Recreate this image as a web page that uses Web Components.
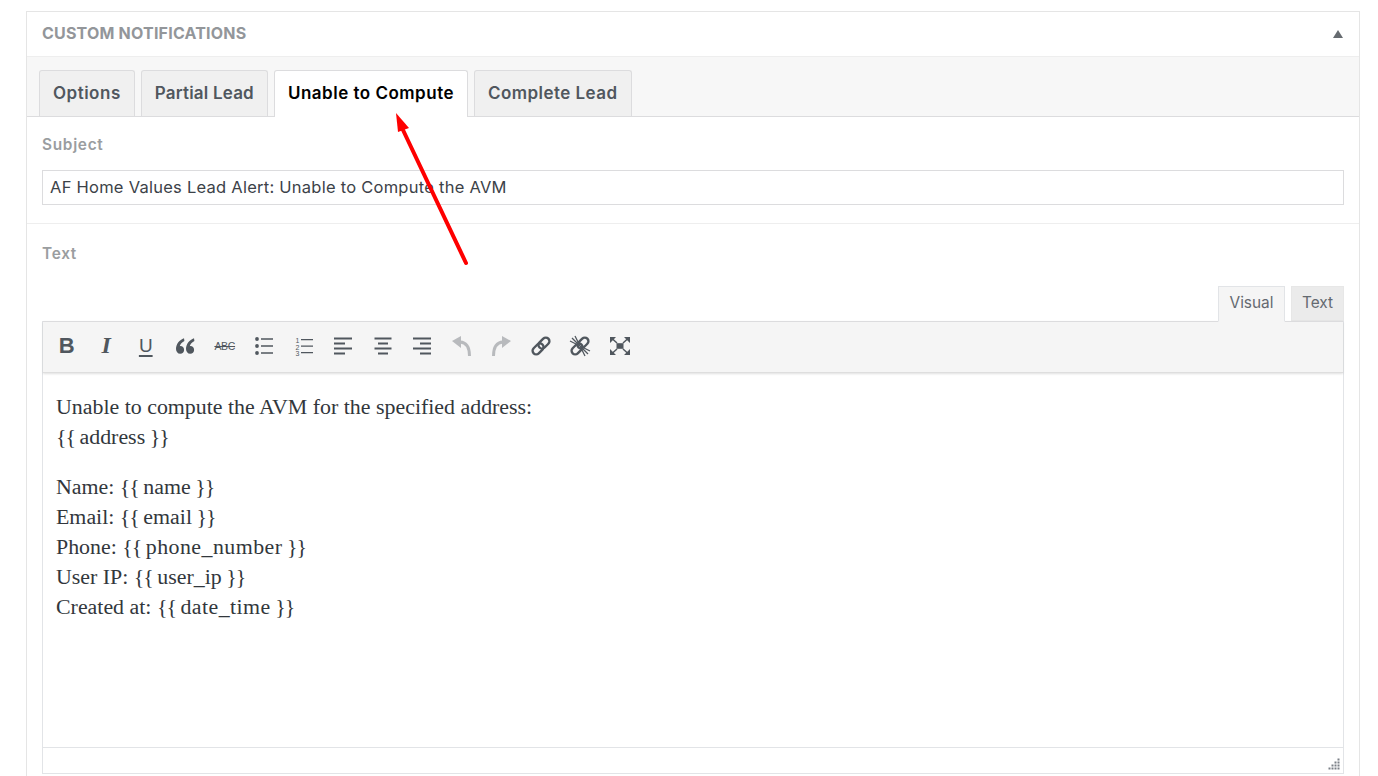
<!DOCTYPE html>
<html>
<head>
<meta charset="utf-8">
<title>Custom Notifications</title>
<style>
    html, body { margin: 0; height: 776px; overflow: hidden; background: #fff; }
    body { font-family: Inter, "Liberation Sans", sans-serif; color: #32373c; }
    /* ajust d'amplada de les variables del correu */
    .br { letter-spacing: -1px; }
    .wide { letter-spacing: 0.45px; }
</style>
</head>
<body>
<notif-panel>
    <panel-tab slot="tabs">Options</panel-tab>
    <panel-tab slot="tabs" style="letter-spacing: 0.2px">Partial Lead</panel-tab>
    <panel-tab slot="tabs" active>Unable to Compute</panel-tab>
    <panel-tab slot="tabs" style="letter-spacing: 0.45px">Complete Lead</panel-tab>
    <subject-field value="AF Home Values Lead Alert: Unable to Compute the AVM"></subject-field>
    <text-editor>
        <p>Unable to compute the AVM for the specified address:<br><span class="br">{{ </span>address<span class="br"> }}</span></p>
        <p>Name: <span class="br">{{ </span>name<span class="br"> }}</span><br>Email: <span class="br">{{ </span>email<span class="br"> }}</span><br>Phone: <span class="br">{{ </span><span class="wide">phone_number</span><span class="br"> }}</span><br>User IP: <span class="br">{{ </span>user_ip<span class="br"> }}</span><br>Created at: <span class="br">{{ </span><span class="wide">date_time</span><span class="br"> }}</span></p>
    </text-editor>
</notif-panel>

<script>
class NotifPanel extends HTMLElement {
    constructor(){
        super();
        this.attachShadow({mode : 'open'});
        this.shadowRoot.innerHTML = `
            <style>
                :host {
                    display: block;
                    position: relative;
                    margin: 11px 18px 0 26px;
                    border: 1px solid #e5e5e5;
                    background: #fff;
                    height: 900px;
                }
                .head {
                    display: flex;
                    align-items: center;
                    justify-content: space-between;
                    box-sizing: border-box;
                    height: 45px;
                    padding: 0 16px 2px 15px;
                    border-bottom: 1px solid #eee;
                }
                h2 {
                    margin: 0;
                    font-size: 16px;
                    font-weight: 700;
                    letter-spacing: 0.2px;
                    color: #93969a;
                }
                .caret {
                    width: 0;
                    height: 0;
                    margin-top: 2px;
                    border-left: 5px solid transparent;
                    border-right: 5px solid transparent;
                    border-bottom: 8px solid #666b70;
                }
                .tabs {
                    display: flex;
                    gap: 6px;
                    height: 46px;
                    padding: 13px 12px 0;
                    background: #f7f7f7;
                    border-bottom: 1px solid #dcdcde;
                }
            </style>
            <div class="head"><h2>CUSTOM NOTIFICATIONS</h2><span class="caret"></span></div>
            <div class="tabs"><slot name="tabs"></slot></div>
            <slot></slot>
            <red-arrow></red-arrow>`;
    }
}
customElements.define('notif-panel', NotifPanel);

class PanelTab extends HTMLElement {
    constructor(){
        super();
        this.attachShadow({mode : 'open'});
        this.shadowRoot.innerHTML = `
            <style>
                :host {
                    display: block;
                    box-sizing: border-box;
                    height: 46px;
                    padding: 0 13px;
                    line-height: 45px;
                    font-size: 17px;
                    font-weight: 600;
                    letter-spacing: 0.5px;
                    color: #50575e;
                    background: #f0f0f0;
                    border: 1px solid #dcdcde;
                    border-bottom: 0;
                    border-radius: 3px 3px 0 0;
                }
                :host([active]) {
                    background: #fff;
                    color: #000;
                    height: 47px;
                    position: relative;
                }
            </style>
            <slot></slot>`;
    }
}
customElements.define('panel-tab', PanelTab);

class SubjectField extends HTMLElement {
    constructor(){
        super();
        this.attachShadow({mode : 'open'});
    }
    connectedCallback() {
        this.render();
    }
    render(){
        const value = this.getAttribute('value') || '';
        this.shadowRoot.innerHTML = `
            <style>
                :host {
                    display: block;
                    padding: 19px 15px 18px;
                    border-bottom: 1px solid #eee;
                }
                label {
                    display: block;
                    height: 17px;
                    line-height: 17px;
                    font-size: 15.4px;
                    font-weight: 600;
                    letter-spacing: 0.7px;
                    color: #9a9da0;
                    margin-bottom: 17px;
                }
                .input {
                    box-sizing: border-box;
                    height: 35px;
                    line-height: 33px;
                    padding: 0 7px;
                    border: 1px solid #dcdcde;
                    font-size: 16.5px;
                    letter-spacing: 0.25px;
                    color: #3c4248;
                }
            </style>
            <label>Subject</label>
            <div class="input">${value}</div>`;
    }
}
customElements.define('subject-field', SubjectField);

class TextEditor extends HTMLElement {
    constructor(){
        super();
        this.attachShadow({mode : 'open'});
        const link = '<rect x="0.600" y="7.400" width="12.500" height="7.200" rx="3.600"/><rect x="8.900" y="7.400" width="12.500" height="7.200" rx="3.600"/>';
        const icons = [
            '<span class="t b">B</span>',
            '<span class="t i">I</span>',
            '<span class="t u">U</span>',
            '<svg viewBox="0 0 20 20"><path d="M9 2.200C4.500 4 1 7.800 1 13c0 2.600 1.700 4.800 4.200 4.800 2.300 0 3.900-1.800 3.900-3.900 0-2.200-1.600-3.800-3.800-3.800-.2 0-.4 0-.5.100.2-1.700 1.800-3.700 4.600-5.200z"/><path transform="translate(10 0)" d="M9 2.200C4.500 4 1 7.800 1 13c0 2.600 1.700 4.800 4.200 4.800 2.300 0 3.900-1.800 3.900-3.900 0-2.200-1.600-3.800-3.800-3.800-.2 0-.4 0-.5.100.2-1.700 1.800-3.700 4.600-5.200z"/></svg>',
            '<span class="t s">ABC</span>',
            '<svg viewBox="0 0 20 20"><circle cx="3" cy="3" r="1.900"/><circle cx="3" cy="10" r="1.900"/><circle cx="3" cy="17" r="1.900"/><path d="M7 2.300h12v1.400H7zM7 9.300h12v1.400H7zM7 16.300h12v1.400H7z"/></svg>',
            '<svg viewBox="0 0 20 20"><text x="1.500" y="7" font-size="7" font-family="Liberation Sans">1</text><text x="1.500" y="13.500" font-size="7" font-family="Liberation Sans">2</text><text x="1.500" y="20" font-size="7" font-family="Liberation Sans">3</text><path d="M7 3h12v1.200H7zM7 9.500h12v1.200H7zM7 16h12v1.200H7z"/></svg>',
            '<svg viewBox="0 0 20 20"><path d="M1 1.500h18v2H1zM1 6.500h11v2H1zM1 11.500h18v2H1zM1 16.500h11v2H1z"/></svg>',
            '<svg viewBox="0 0 20 20"><path d="M1.500 1.500h17v2h-17zM5 6.500h10v2H5zM1.500 11.500h17v2h-17zM5 16.500h10v2H5z"/></svg>',
            '<svg viewBox="0 0 20 20"><path d="M1 1.500h18v2H1zM8 6.500h11v2H8zM1 11.500h18v2H1zM8 16.500h11v2H8z"/></svg>',
            '<svg class="off" viewBox="0 0 20 20"><path d="M0 5 9 0v12z"/><path d="M8 6c6 .3 9.500 4 9.500 14" fill="none" stroke="#b8babd" stroke-width="3"/></svg>',
            '<svg class="off" viewBox="0 0 20 20"><path d="M20 5 11 0v12z"/><path d="M12 6C6 6.300 2.500 10 2.500 20" fill="none" stroke="#b8babd" stroke-width="3"/></svg>',
            `<svg class="wide" viewBox="0 0 22 22"><g transform="rotate(-45 11 11)" fill="none" stroke="#50575e" stroke-width="2.400">${link}</g></svg>`,
            `<svg class="wide" viewBox="0 0 22 22"><g transform="rotate(-45 11 11)" fill="none" stroke="#50575e" stroke-width="2.400">${link}</g><path d="M11 11 4 1h-3v4zM11 11l7 10h3v-4z" fill="#f5f5f5"/><path d="M11 11 6 1M11 11 1 6M11 11 3 3M11 11l5 10M11 11l10 5M11 11l8 8" stroke="#50575e" stroke-width="1.300"/></svg>`,
            '<svg class="wide" viewBox="0 0 22 22"><path d="M7.500 8.200h7v5.600h-7z"/><path d="M3 3.500 8 8M19 3.500 14 8M3 18.500 8 14M19 18.500 14 14" stroke="#50575e" stroke-width="1.500"/><path d="M1 2h6L1 8zM21 2h-6l6 6zM1 20h6l-6-6zM21 20h-6l6-6z"/></svg>'
        ];
        this.shadowRoot.innerHTML = `
            <style>
                :host {
                    display: block;
                    padding: 18px 15px 0;
                }
                label {
                    display: block;
                    height: 24px;
                    line-height: 24px;
                    font-size: 15.4px;
                    font-weight: 600;
                    letter-spacing: 0.7px;
                    color: #9a9da0;
                }
                .modes {
                    display: flex;
                    justify-content: flex-end;
                    gap: 6px;
                    height: 35px;
                    margin-top: 20px;
                }
                .modes span {
                    box-sizing: border-box;
                    height: 35px;
                    line-height: 32px;
                    text-align: center;
                    font-size: 15.4px;
                    color: #646970;
                    background: #ebebeb;
                    border: 1px solid #e7e7e7;
                    width: 53px;
                    position: relative;
                }
                .modes span.on {
                    width: 67px;
                    background: #f5f5f5;
                    border-color: #e2e4e7;
                    border-bottom-color: #f5f5f5;
                    height: 36px;
                    z-index: 1;
                }
                .box {
                    border: 1px solid #e2e4e7;
                    border-top: 0;
                }
                .bar {
                    display: flex;
                    align-items: center;
                    height: 52px;
                    box-sizing: border-box;
                    padding: 0 4px 3px;
                    background: #f5f5f5;
                    border-top: 1px solid #dcdcde;
                    border-bottom: 1px solid #dedede;
                    box-shadow: 0 1px 2px rgba(0,0,0,.12);
                    position: relative;
                }
                .bar div {
                    display: flex;
                    align-items: center;
                    justify-content: center;
                    width: 39.5px;
                    height: 24px;
                    color: #50575e;
                }
                .bar svg { width: 20px; height: 20px; fill: #50575e; overflow: visible; }
                .bar svg.off { fill: #b8babd; }
                .bar svg.wide { width: 22px; height: 22px; }
                .t { font-family: "Liberation Sans", sans-serif; }
                .b { font-size: 22px; font-weight: 700; }
                .i { font-family: "Liberation Serif", serif; font-size: 24px; font-weight: 700; font-style: italic; }
                .u { font-size: 19px; text-decoration: underline; text-underline-offset: 3px; text-decoration-thickness: 2px; }
                .s { font-size: 10.5px; text-decoration: line-through; letter-spacing: -0.3px; }
                .content {
                    height: 374px;
                    box-sizing: border-box;
                    padding: 19px 13px;
                    font-family: "Liberation Serif", serif;
                    font-size: 21.9px;
                    line-height: 30px;
                    color: #32373c;
                }
                ::slotted(p) { margin: 0 0 20px; }
                .status {
                    position: relative;
                    height: 25px;
                    border-top: 1px solid #e2e4e7;
                }
                .grip {
                    position: absolute;
                    right: 3px;
                    bottom: 3px;
                    width: 12px;
                    height: 12px;
                    fill: #7b8087;
                }
            </style>
            <label>Text</label>
            <div class="modes"><span class="on">Visual</span><span>Text</span></div>
            <div class="box">
                <div class="bar">${icons.map(i => `<div>${i}</div>`).join('')}</div>
                <div class="content"><slot></slot></div>
                <div class="status"><svg class="grip" viewBox="0 0 12 12">${this.gripDots()}</svg></div>
            </div>`;
    }

    // escala de punts de la cantonada
    gripDots(){
        let dots = '';
        for (let row = 0; row < 4; row++) {
            for (let col = 3 - row; col < 4; col++) {
                dots += `<rect x="${col * 3 + 0.5}" y="${row * 3 + 0.5}" width="2" height="2"/>`;
            }
        }
        return dots;
    }
}
customElements.define('text-editor', TextEditor);

class RedArrow extends HTMLElement {
    constructor(){
        super();
        this.attachShadow({mode : 'open'});
        this.shadowRoot.innerHTML = `
            <style>
                :host { position: absolute; left: 0; top: 0; pointer-events: none; }
                svg { display: block; width: 500px; height: 280px; }
            </style>
            <svg viewBox="0 0 500 280">
                <path d="M439 251 376 118" fill="none" stroke="#fe0000" stroke-width="4" stroke-linecap="round"/>
                <path d="M369 101 382 116 371 120z" fill="#fe0000"/>
            </svg>`;
    }
}
customElements.define('red-arrow', RedArrow);
</script>
</body>
</html>
